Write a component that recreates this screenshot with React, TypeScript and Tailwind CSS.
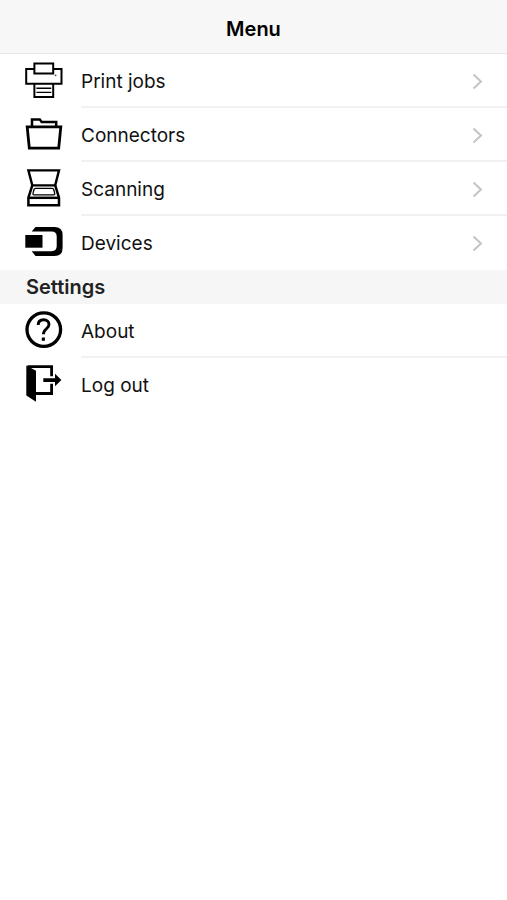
import React from 'react';

interface MenuItem {
  label: string;
  icon: React.ReactNode;
  chevron?: boolean;
}

const Icon: React.FC<{ children: React.ReactNode }> = ({ children }) => (
  <svg viewBox="0 0 40 40" className="h-10 w-10 shrink-0" fill="none" stroke="#000" aria-hidden="true">
    {children}
  </svg>
);

const PrinterIcon = () => (
  <Icon>
    <path d="M10 8H2.2V22.7H37.5V8H30" strokeWidth="2" />
    <path d="M10.4 2.6H29.2V12.4H10.4Z" strokeWidth="2" />
    <path d="M10.4 22.7V36H29.2V22.7" strokeWidth="2" />
    <path d="M12.4 27.2H27.3M12.4 31.4H27.3" strokeWidth="1.4" />
    <circle cx="31.6" cy="14.3" r="0.9" fill="#444" stroke="none" />
  </Icon>
);

const FolderIcon = () => (
  <Icon>
    <path d="M3.2 11.8H36.8L34.7 33.2H5.3Z" strokeWidth="2.8" />
    <path d="M8 11V4.4H15.8L17.6 7H32.2V11" strokeWidth="2.5" />
  </Icon>
);

const ScannerIcon = () => (
  <Icon>
    <path d="M4.4 1.4H35L31.2 16.4H8.3Z" strokeWidth="2.4" />
    <path d="M8.3 16.4L4.4 28.6V36.2H35V28.6L31.2 16.4" strokeWidth="2.5" />
    <path d="M4.4 28.8H35" strokeWidth="2.5" />
    <path d="M11.5 19.4H28.2Q29.4 19.4 29.7 20.5L30.7 24.4Q31 25.8 29.6 25.8H10Q8.6 25.8 9 24.4L10 20.5Q10.3 19.4 11.5 19.4Z" strokeWidth="1.3" />
  </Icon>
);

const DeviceIcon = () => (
  <Icon>
    <path d="M1.3 12H18.5V24.7H1.3Z" fill="#000" stroke="none" />
    <path
      d="M7.7 8.4L11.5 4H30.5Q38.6 4 38.6 12V25Q38.6 33 30.5 33H11.5L7.7 28.2H27.5Q32.7 28.2 32.7 23V13.5Q32.7 8.4 27.5 8.4Z"
      fill="#000"
      stroke="none"
    />
  </Icon>
);

const HelpIcon = () => (
  <Icon>
    <circle cx="19.8" cy="18.6" r="16.8" strokeWidth="3.3" />
    <path d="M14.2 14C14.2 10.6 16.4 8.8 19.6 8.8C22.8 8.8 25 10.7 25 13.5C25 17.8 19.4 17.8 19.4 23.3" strokeWidth="2.9" />
    <path d="M17.8 26.5H20.9V29.8H17.8Z" fill="#000" stroke="none" />
  </Icon>
);

const LogoutIcon = () => (
  <Icon>
    <path d="M3.5 1.7H27.6V11.3M27.6 18.7V28.5H11" strokeWidth="2.8" />
    <path d="M2.3 0.4L12 5.8V36.7L2.3 30.5Z" fill="#000" stroke="none" />
    <path d="M19.3 13.2H31V8.8L37.4 15L31 21.2V16.9H19.3Z" fill="#000" stroke="none" />
  </Icon>
);

const mainItems: MenuItem[] = [
  { label: 'Print jobs', icon: <PrinterIcon />, chevron: true },
  { label: 'Connectors', icon: <FolderIcon />, chevron: true },
  { label: 'Scanning', icon: <ScannerIcon />, chevron: true },
  { label: 'Devices', icon: <DeviceIcon />, chevron: true },
];

const settingsItems: MenuItem[] = [
  { label: 'About', icon: <HelpIcon /> },
  { label: 'Log out', icon: <LogoutIcon /> },
];

const MenuList: React.FC<{ items: MenuItem[] }> = ({ items }) => (
  <ul>
    {items.map((item) => (
      <li key={item.label} className="group">
        <button type="button" className="flex h-[54px] w-full items-center gap-[17px] pl-6 text-left">
          {item.icon}
          <span className="flex h-full flex-1 items-center justify-between border-b-2 border-[#f1f1f1] pt-1 pr-6 group-last:border-transparent">
            <span className="text-[19px] leading-6 text-[#111]">{item.label}</span>
            {item.chevron && (
              <svg viewBox="0 0 12 18" className="h-[18px] w-3" fill="none" stroke="#c4c4c6" strokeWidth="2" aria-hidden="true">
                <path d="M2.5 1.5L10 8.5L2.5 15.5" />
              </svg>
            )}
          </span>
        </button>
      </li>
    ))}
  </ul>
);

const App: React.FC = () => {
  return (
    <div className="min-h-screen bg-white font-['Inter',sans-serif]">
      <header className="flex h-[54px] items-center justify-center border-b border-[#e6e6e6] bg-[#f7f7f7] pt-1">
        <h1 className="text-[20px] leading-6 font-semibold text-black">Menu</h1>
      </header>

      <main>
        <MenuList items={mainItems} />
        <h2 className="bg-[#f6f6f6] px-[26px] py-[5px] text-[20px] leading-6 font-semibold text-[#222]">Settings</h2>
        <MenuList items={settingsItems} />
      </main>
    </div>
  );
};

export default App;
